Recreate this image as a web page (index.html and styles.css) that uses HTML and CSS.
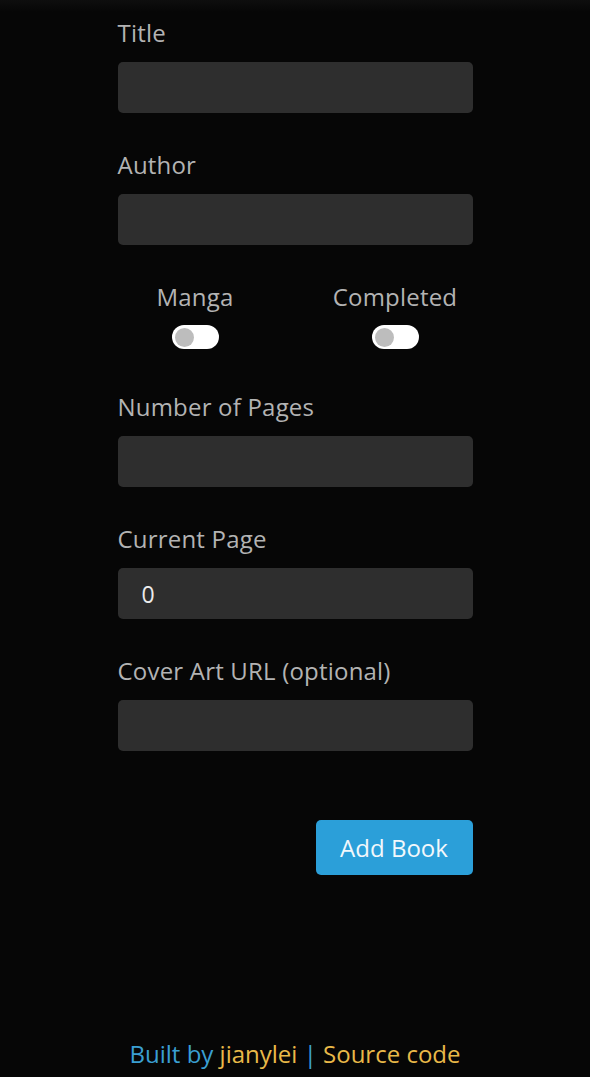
FILE: index.html
```html
<!DOCTYPE html>
<html lang="en">
<head>
<meta charset="utf-8">
<title>Add Book</title>
<link rel="stylesheet" href="styles.css">
</head>
<body>
<div class="page">
  <form class="form">
    <div class="field">
      <label class="label">Title</label>
      <input class="input" type="text">
    </div>
    <div class="field">
      <label class="label">Author</label>
      <input class="input" type="text">
    </div>
    <div class="toggles">
      <div class="toggle-item">
        <span class="label">Manga</span>
        <span class="switch"><span class="knob"></span></span>
      </div>
      <div class="toggle-item">
        <span class="label">Completed</span>
        <span class="switch"><span class="knob"></span></span>
      </div>
    </div>
    <div class="field">
      <label class="label">Number of Pages</label>
      <input class="input" type="text">
    </div>
    <div class="field">
      <label class="label">Current Page</label>
      <input class="input" type="text" value="0">
    </div>
    <div class="field">
      <label class="label">Cover Art URL (optional)</label>
      <input class="input" type="text">
    </div>
    <div class="actions">
      <button class="button" type="button">Add Book</button>
    </div>
  </form>
  <footer class="footer">
    <span class="blue">Built by</span> <a class="yellow">jianylei</a> <span class="blue">|</span> <a class="yellow">Source code</a>
  </footer>
</div>
</body>
</html>
```

FILE: styles.css
```css
* { box-sizing: border-box; }
html, body { margin: 0; padding: 0; }
body {
  background: linear-gradient(#0e0e0e 0, #060606 12px) #060606;
  font-family: "Open Sans", "Noto Sans", sans-serif;
  color: #b3b3b3;
}
.page {
  min-height: 100vh;
  display: flex;
  flex-direction: column;
  align-items: center;
}
.form {
  width: 355px;
  padding-top: 18px;
  display: flex;
  flex-direction: column;
}
.field {
  display: flex;
  flex-direction: column;
  margin-bottom: 37px;
}
.label {
  font-size: 24px;
  line-height: 30px;
  height: 30px;
  letter-spacing: 0.2px;
  color: #b3b3b3;
  margin-bottom: 14px;
  white-space: nowrap;
}
.input {
  height: 51px;
  border: none;
  border-radius: 5px;
  background: #2e2e2e;
  color: #ececec;
  font-family: inherit;
  font-size: 23px;
  padding: 0 24px;
  outline: none;
}
.toggles {
  display: grid;
  grid-template-columns: 200px 200px;
  justify-content: center;
  margin-bottom: 43px;
}
.toggle-item {
  display: flex;
  flex-direction: column;
  align-items: center;
}
.toggle-item .label { margin-bottom: 13px; }
.switch {
  width: 47px;
  height: 24px;
  border-radius: 12px;
  background: #ffffff;
  display: flex;
  align-items: center;
  padding: 0 3px;
}
.knob {
  width: 19px;
  height: 19px;
  border-radius: 50%;
  background: #bdbdbd;
}
.actions {
  display: flex;
  justify-content: flex-end;
  margin-top: 32px;
}
.button {
  width: 157px;
  height: 55px;
  border: none;
  border-radius: 5px;
  background: #2b9fd9;
  color: #f2f8fc;
  font-family: inherit;
  font-size: 24px;
}
.footer {
  margin-top: auto;
  padding-bottom: 8px;
  font-size: 24px;
  line-height: 30px;
}
.blue { color: #3a9fd2; }
.yellow { color: #e9b949; }
```
